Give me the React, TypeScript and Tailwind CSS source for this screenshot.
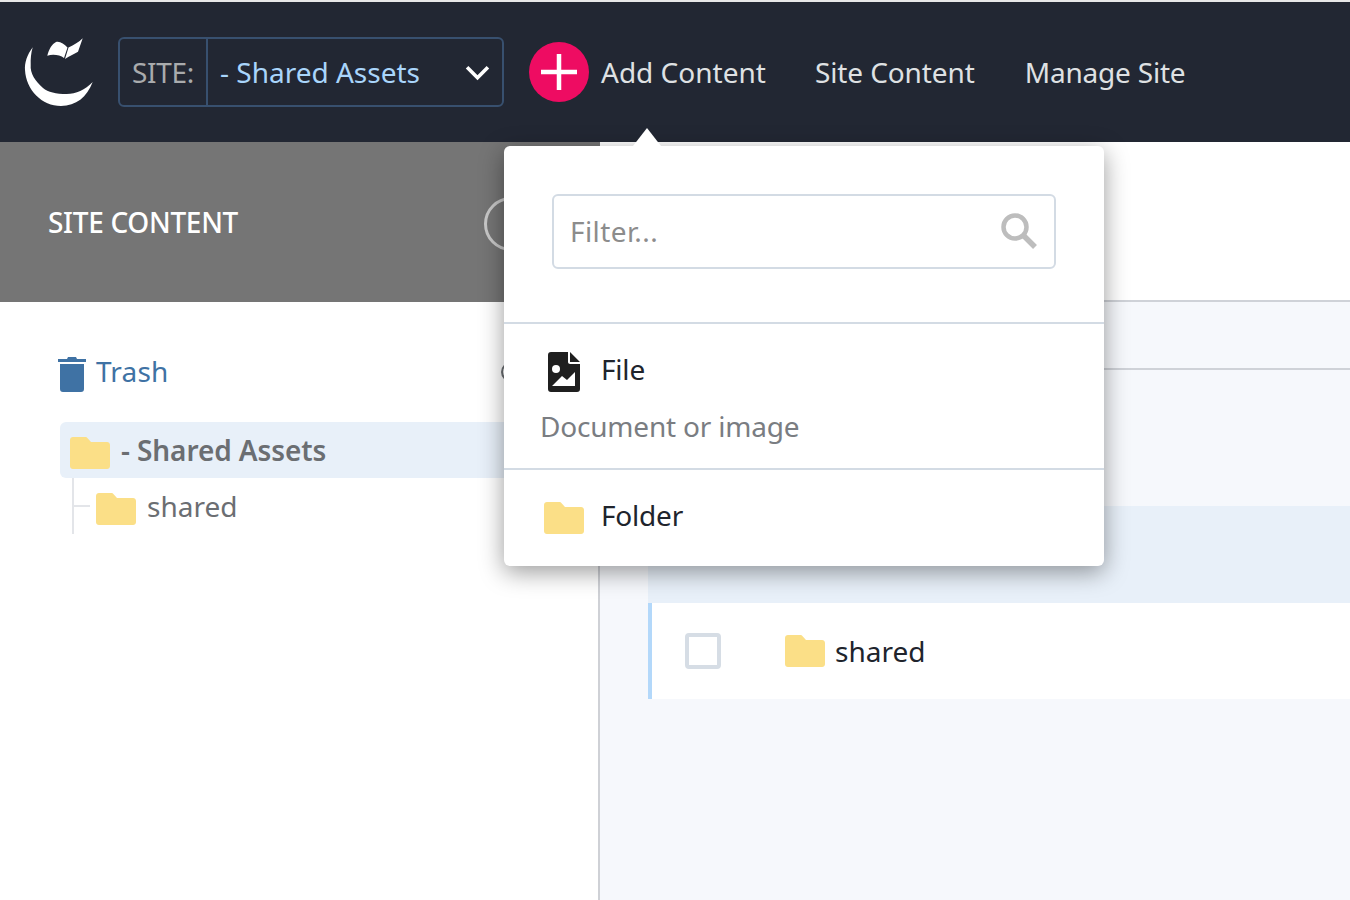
const Folder = ({ className }: { className: string }) => (
  <svg viewBox="0 0 40 32" className={className} aria-hidden="true">
    <path d="M3 0h12c1.2 0 2 .5 2.8 1.4L21 5h16c1.7 0 3 1.3 3 3v21c0 1.7-1.300 3-3 3H3c-1.700 0-3-1.300-3-3V3c0-1.700 1.300-3 3-3z" fill="#fbdf87" />
  </svg>
);

const Logo = () => (
  <svg viewBox="0 0 70 70" className="w-[70px] h-[70px]" aria-hidden="true">
    <path d="M8.700 10.300C3 18 .5 26 1 33c1 20 17 36 36 36 15 0 26-9 31.700-24C61 53 52 57 42.700 57 32 57 24 55 19 51 11 44 6 36 6.700 28c-.2-6 .3-12 2-17.700z" fill="#fff" />
    <path d="M23.300 18.700C25 12 28 7 32 5c4-1 8 2 11.500 5.500L40 21c-4-3-11-4-16.700-2.300z" fill="#fff" />
    <path d="M44.500 10.500C50 8 55 5 58.700 1.300L54 14.700C50 17 45 19 41 22z" fill="#fff" />
  </svg>
);

export default function App() {
  return (
    <div className="relative w-[1350px] h-[900px] overflow-hidden bg-white font-['Noto_Sans','Open_Sans',sans-serif]">
      <div className="h-[2px] bg-[#e8e8e8]" />
      <header className="h-[140px] bg-[#222733] flex items-center pl-[24px]">
        <Logo />
        <div className="ml-[24px] w-[386px] h-[70px] border-2 border-[#38506f] rounded-[6px] flex items-center">
          <span className="w-[88px] h-full border-r-2 border-[#38506f] flex items-center justify-center text-[28px] text-[#a9abad] tracking-[-0.3px]">SITE:</span>
          <span className="pl-[12px] text-[28px] text-[#a9d5fb] flex-1">- Shared Assets</span>
          <svg viewBox="0 0 24 16" className="w-[25px] h-[17px] mr-[12px]" aria-hidden="true">
            <path d="M2 3l10 10L22 3" fill="none" stroke="#fff" strokeWidth="3.500" />
          </svg>
        </div>
        <div className="ml-[25px] w-[60px] h-[60px] rounded-full bg-[#ee0c62] flex items-center justify-center">
          <svg viewBox="0 0 36 36" className="w-[36px] h-[36px]" aria-hidden="true">
            <path d="M18 0v36M0 18h36" stroke="#fff" strokeWidth="4.500" />
          </svg>
        </div>
        <span className="ml-[12px] text-[28px] text-[#dfe1e3]">Add Content</span>
        <span className="ml-[49px] text-[28px] text-[#dfe1e3] tracking-[-0.1px]">Site Content</span>
        <span className="ml-[50px] text-[28px] text-[#dfe1e3] tracking-[-0.2px]">Manage Site</span>
      </header>

      <div className="flex h-[758px]">
        <aside className="w-[600px] border-r-2 border-[#cfd1d6] bg-white shrink-0">
          <div className="h-[160px] -mr-[2px] bg-[#757575] flex items-center pl-[48px] pr-[62px] justify-between">
            <span className="text-[28px] text-white tracking-[-0.3px] font-medium">SITE CONTENT</span>
            <span className="w-[54px] h-[54px] rounded-full border-[3px] border-[#c8c8c8] shrink-0 mt-[4px]" />
          </div>
          <div className="pt-[50px] pl-[58px]">
            <div className="flex items-center gap-[10px] h-[40px]">
              <svg viewBox="0 0 28 36" className="w-[28px] h-[36px] mt-[4px]" aria-hidden="true">
                <path d="M10 1h8l1 2h9v3H0V3h9zM2 8h24v25c0 2-1 3-3 3H5c-2 0-3-1-3-3z" fill="#3f72a4" />
              </svg>
              <span className="text-[28px] text-[#3f72a4] tracking-[0.2px] -mt-[2px]">Trash</span>
              <span className="ml-auto mr-[73px] w-[24px] h-[20px] rounded-full border-2 border-[#6b6e72]" />
            </div>
            <div className="mt-[30px] ml-[2px] h-[56px] bg-[#e8f0f9] rounded-l-[6px] flex items-center pl-[10px] gap-[11px]">
              <Folder className="w-[40px] h-[32px] mt-[6px]" />
              <span className="text-[28px] text-[#6b6e72] font-semibold tracking-[-0.1px]">- Shared Assets</span>
            </div>
            <div className="ml-[14px] h-[56px] border-l-2 border-[#e3e5e9] flex items-center">
              <span className="w-[16px] h-[2px] bg-[#e3e5e9]" />
              <Folder className="ml-[6px] w-[40px] h-[32px] mt-[6px]" />
              <span className="ml-[11px] text-[28px] text-[#6b6e72]">shared</span>
            </div>
          </div>
        </aside>

        <main className="flex-1 min-w-0 bg-[#f6f8fc]">
          <div className="h-[160px] bg-white border-b-2 border-[#cfd2d8] -mb-[2px]" />
          <div className="h-[68px] border-b-2 border-[#cfd2d8] mt-[2px]" />
          <div className="h-[136px]" />
          <div className="ml-[48px]">
            <div className="h-[97px] bg-[#e8f0f9]" />
            <div className="h-[96px] bg-white border-l-4 border-[#b3d8fa] flex items-center">
              <span className="ml-[33px] w-[36px] h-[36px] rounded-[4px] border-4 border-[#d6dde5] bg-white" />
              <Folder className="ml-[64px] w-[40px] h-[32px]" />
              <span className="ml-[10px] text-[28px] text-[#20242c]">shared</span>
            </div>
          </div>
        </main>
      </div>

      <div className="absolute left-[504px] top-[146px] w-[600px] h-[420px] bg-white rounded-[6px] shadow-[0_6px_24px_rgba(0,0,0,0.4)]">
        <div className="absolute left-[129px] -top-[18px] w-0 h-0 border-x-[14px] border-x-transparent border-b-[18px] border-b-white" />
        <div className="h-[178px] pt-[48px] px-[48px] border-b-2 border-[#d3dbe4]">
          <div className="h-[75px] border-2 border-[#d3dbe4] rounded-[6px] flex items-center justify-between pl-[16px] pr-[17px]">
            <span className="text-[28px] text-[#8c8c8c] tracking-[0.4px] -mt-[2px]">Filter...</span>
            <svg viewBox="0 0 36 36" className="w-[36px] h-[36px] -mt-[2px]" aria-hidden="true">
              <circle cx="14" cy="14" r="11.500" fill="none" stroke="#bdbdbd" strokeWidth="4.500" />
              <path d="M22 22l12 12" stroke="#bdbdbd" strokeWidth="5.500" />
            </svg>
          </div>
        </div>
        <div className="h-[146px] border-b-2 border-[#d3dbe4] pt-[26px] pl-[36px]">
          <div className="flex items-center h-[44px]">
            <svg viewBox="0 0 32 40" className="ml-[8px] w-[32px] h-[40px]" aria-hidden="true">
              <path d="M3 0h17v10c0 1 1 2 2 2h10v25c0 2-1 3-3 3H3c-2 0-3-1-3-3V3c0-2 1-3 3-3zM22 0l10 10H22z" fill="#1f1f1f" />
              <circle cx="8" cy="17" r="4" fill="#fff" />
              <path d="M4 34l10-10 5 4 8-8v14z" fill="#fff" />
            </svg>
            <span className="ml-[21px] text-[28px] text-[#20242c] tracking-[-0.2px] -mt-[6px]">File</span>
          </div>
          <div className="mt-[13px] text-[28px] text-[#7a7d82] tracking-[-0.2px] leading-[38px]">Document or image</div>
        </div>
        <div className="flex items-center pl-[40px] h-[94px]">
          <Folder className="w-[40px] h-[32px] mt-[2px]" />
          <span className="ml-[17px] text-[28px] text-[#20242c] tracking-[-0.2px] -mt-[4px]">Folder</span>
        </div>
      </div>
    </div>
  );
}
